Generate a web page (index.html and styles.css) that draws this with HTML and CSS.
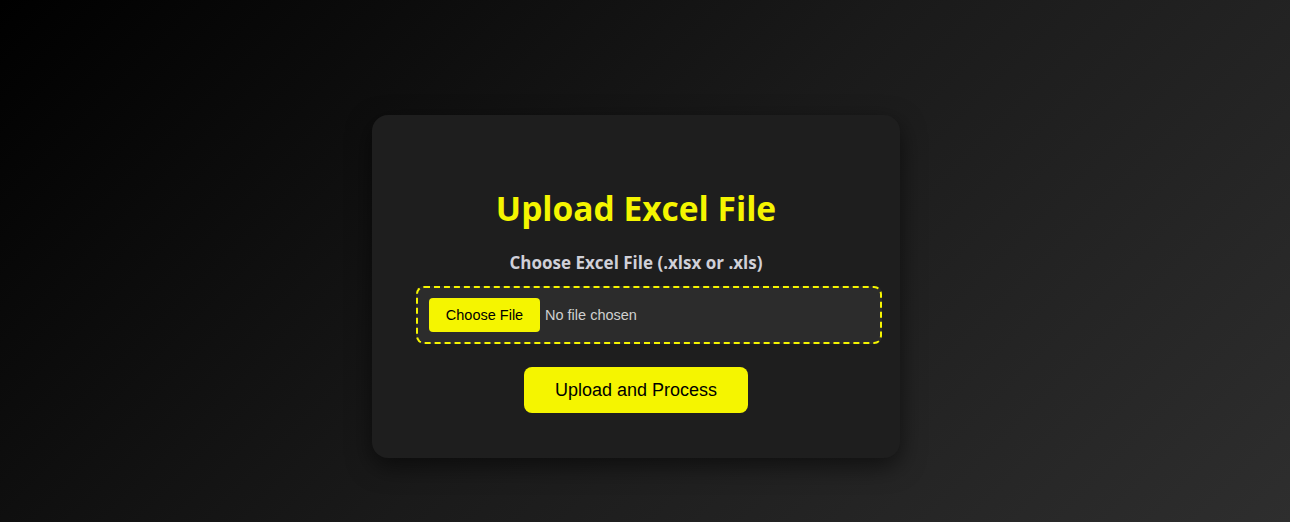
FILE: index.html
```html
<!DOCTYPE html>
<html lang="en">
<head>
<meta charset="utf-8">
<title>Upload Excel File</title>
<link rel="stylesheet" href="styles.css">
</head>
<body>
<main class="page">
  <form class="card">
    <h1 class="title">Upload Excel File</h1>
    <label class="label" for="file">Choose Excel File (.xlsx or .xls)</label>
    <div class="dropzone">
      <input class="file" id="file" type="file" accept=".xlsx,.xls">
    </div>
    <button class="submit" type="button">Upload and Process</button>
  </form>
</main>
</body>
</html>
```
FILE: styles.css
```css
html, body {
  margin: 0;
  height: 100%;
}
body {
  background: linear-gradient(135deg, #000000 0%, #1a1a1a 50%, #2e2e2e 100%);
  font-family: "Open Sans", "Noto Sans", sans-serif;
}
.page {
  height: 522px;
  display: flex;
  justify-content: center;
  align-items: flex-start;
  padding: 115px 18px 0 0;
  box-sizing: border-box;
}
.card {
  width: 528px;
  box-sizing: border-box;
  background: #1e1e1e;
  border-radius: 16px;
  box-shadow: 0 8px 24px rgba(0, 0, 0, 0.55);
  padding: 69px 40px 45px;
  display: flex;
  flex-direction: column;
  align-items: center;
}
.title {
  margin: 0;
  font-size: 33.5px;
  line-height: 48px;
  font-weight: 700;
  color: #f5f500;
}
.label {
  margin-top: 19px;
  font-size: 17px;
  line-height: 24px;
  font-weight: 700;
  color: #d0d0d8;
}
.dropzone {
  margin-top: 11px;
  align-self: flex-start;
  margin-left: 4px;
  width: 466px;
  box-sizing: border-box;
  border: 2px dashed #f5f500;
  border-radius: 8px;
  background: #2c2c2c;
  padding: 10px 11px;
  display: flex;
}
.file {
  font-family: "Liberation Sans", Arial, sans-serif;
  font-size: 14.5px;
  color: #d0d0d0;
  height: 34px;
}
.file::file-selector-button {
  font-family: "Liberation Sans", Arial, sans-serif;
  font-size: 14.5px;
  background: #f5f500;
  color: #000;
  border: none;
  border-radius: 4px;
  width: 111px;
  height: 34px;
  margin-right: 5px;
  cursor: pointer;
}
.submit {
  margin-top: 23px;
  width: 224px;
  height: 46px;
  border: none;
  border-radius: 8px;
  background: #f5f500;
  color: #000;
  font-family: "Liberation Sans", Arial, sans-serif;
  font-size: 18px;
  cursor: pointer;
}
```
